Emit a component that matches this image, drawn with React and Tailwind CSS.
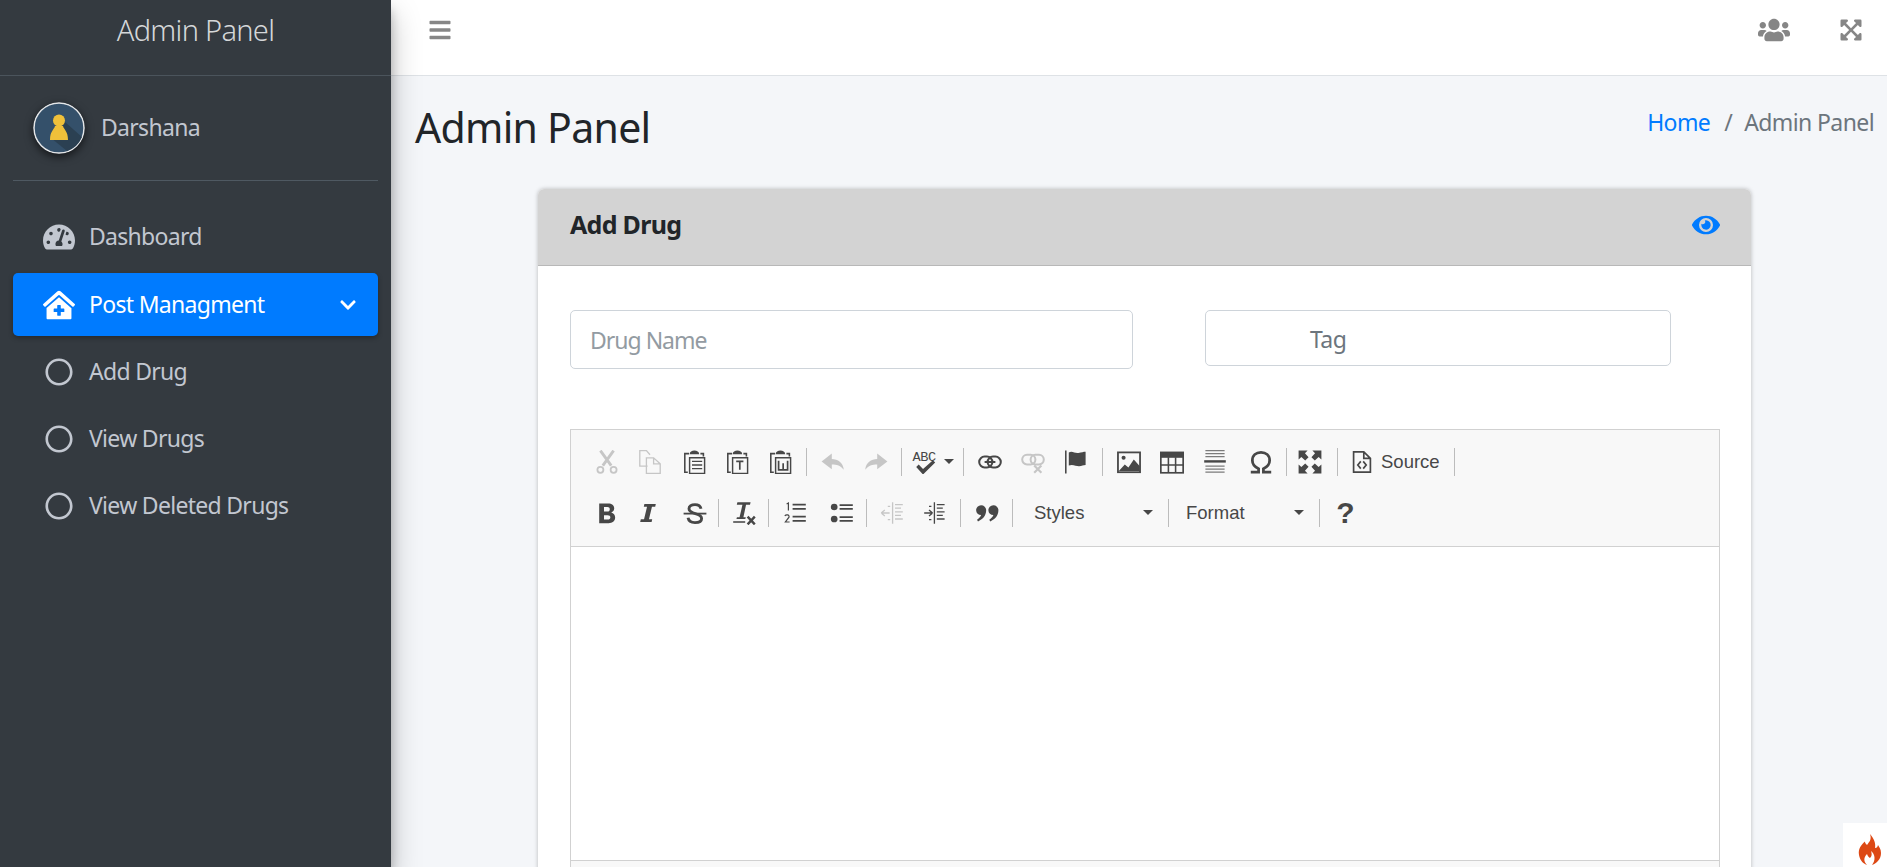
import React from 'react';
import { FaBars, FaChevronDown, FaClinicMedical, FaExpandArrowsAlt, FaEye, FaRegCircle, FaTachometerAlt, FaUsers } from 'react-icons/fa';

const sans = { fontFamily: '"Noto Sans", sans-serif' };

// ckeditor toolbar glyphs, all drawn on a 20x20 box
const clip = <><path d="M5 3H1.500v15.500H4M14.500 3H17v2.500" fill="none" stroke="currentColor" strokeWidth="1.300" /><path d="M5.500 3.500C5.500 1.500 7.500 .5 9.500 .5s4 1 4 3z" fill="currentColor" /><path d="M5.500 6.500h12.500v13H5.500z" fill="none" stroke="currentColor" strokeWidth="1.200" /></>;

const glyphs = {
  cut: <><path d="M4.500 .5l9 12.500M15.500 .5l-9 12.500" fill="none" stroke="currentColor" strokeWidth="2.400" /><circle cx="4.500" cy="16.500" r="2.500" fill="none" stroke="currentColor" strokeWidth="1.500" /><circle cx="15.500" cy="16.500" r="2.500" fill="none" stroke="currentColor" strokeWidth="1.500" /></>,
  copy: <path d="M8 13.500H1.500V.5H7l3 3.500M7 6.500h6l5.500 5v8H7zM13 6.500v5h5.500" fill="none" stroke="currentColor" strokeWidth="1.100" />,
  paste: <>{clip}<path d="M7.500 9.500h8.500M7.500 12.500h8.500M7.500 15.500h8.500" stroke="currentColor" strokeWidth="1.200" /></>,
  pasteText: <>{clip}<path d="M8.500 9.500h6M11.500 9.500v7" stroke="currentColor" strokeWidth="1.400" fill="none" /></>,
  pasteWord: <>{clip}<path d="M8 9v7.500h7.500V9M11.800 11v5.500" stroke="currentColor" strokeWidth="1.400" fill="none" /></>,
  undo: <path d="M9 3L.5 9.500 9 16v-4c4 0 7.500 1 10 4.500C18.500 10.500 14 7.500 9 7.500z" fill="currentColor" />,
  redo: <path d="M11 3l8.500 6.500L11 16v-4c-4 0-7.500 1-10 4.500C1.500 10.500 6 7.500 11 7.500z" fill="currentColor" />,
  check: <path d="M5 14.500l2-2 3.500 3.500L18.500 9l1.800 1.800L10.500 20.500z" fill="currentColor" />,
  link: <><rect x="1" y="5.500" width="11" height="9" rx="4.500" fill="none" stroke="currentColor" strokeWidth="1.700" /><rect x="8" y="5.500" width="11" height="9" rx="4.500" fill="none" stroke="currentColor" strokeWidth="1.700" /><path d="M5.500 10h9" stroke="currentColor" strokeWidth="1.700" /></>,
  unlink: <><rect x="1" y="4" width="11" height="8" rx="4" fill="none" stroke="currentColor" strokeWidth="1.700" /><rect x="8" y="4" width="11" height="8" rx="4" fill="none" stroke="currentColor" strokeWidth="1.700" /><path d="M11 13l6 6M17 13l-6 6" stroke="currentColor" strokeWidth="1.800" /></>,
  flag: <><path d="M1.500 .5v19" stroke="currentColor" strokeWidth="1.300" /><path d="M4 2c3-1.500 5 1 8 .5s4-1 6-1v11c-2 0-3 1-5.500 1S7 11.500 4 13z" fill="currentColor" /></>,
  image: <><rect x=".8" y="2" width="18.400" height="16.500" fill="none" stroke="currentColor" strokeWidth="1.500" /><circle cx="5.500" cy="6.500" r="1.700" fill="currentColor" /><path d="M1.500 17.500l5-5.500 3 2.500 4.500-6.500 5 5.500v4z" fill="currentColor" /></>,
  table: <><rect x=".7" y="2" width="18.600" height="17" fill="none" stroke="currentColor" strokeWidth="1.400" /><path d="M.7 2h18.600v4.500H.7z" fill="currentColor" /><path d="M.7 12.500h18.600M7 6v13M13 6v13" stroke="currentColor" strokeWidth="1.300" /></>,
  hr: <><path d="M2 .5h16M2 3h16M2 5.500h16M2 13.500h16M2 16h16M2 18.500h16" stroke="currentColor" strokeWidth="1" opacity="0.7" /><path d="M1 9.500h18" stroke="currentColor" strokeWidth="2" /></>,
  omega: <path d="M1.500 18.500h6.500v-2.800C4.500 14 2.800 11.500 2.800 8.800 2.800 4.500 5.800 2 10 2s7.200 2.500 7.200 6.800c0 2.700-1.700 5.200-5.200 6.900v2.800h6.500" fill="none" stroke="currentColor" strokeWidth="2.300" />,
  maximize: <path d="M.5 .5h7.500L5.800 2.800 8.800 6 6 8.800 2.800 5.800 .5 8zM19.500 .5V8l-2.300-2.200L14 8.800 11.200 6l3-3.200L12 .5zM.5 19.500V12l2.300 2.200L6 11.200 8.800 14l-3 3.200L8 19.500zM19.500 19.500H12l2.200-2.300-3-3.200L14 11.200l3.200 3 2.300-2.200z" fill="currentColor" />,
  source: <><path d="M3 1.500h8.500l5.500 5.500v11.500H3zM11.500 1.500V7H17" fill="none" stroke="currentColor" strokeWidth="1.400" /><path d="M9 9.500l-2.500 3 2.500 3M11 9.500l2.500 3-2.500 3" fill="none" stroke="currentColor" strokeWidth="1.400" /></>,
  bold: <path d="M3.500 2h7.500c3 0 5 1.500 5 4 0 1.700-1 3-2.500 3.500 2 .5 3.300 2 3.300 4.300 0 3-2.300 4.700-5.500 4.700H3.500zm4 3v3.800h2.800c1.400 0 2-.7 2-1.900S11.600 5 10.300 5zm0 6.800v3.700h3c1.500 0 2.300-.7 2.300-1.900s-.8-1.800-2.300-1.800z" fill="currentColor" fillRule="evenodd" />,
  italic: <path d="M7 2.500h9.500l-.5 2.300h-2.700L10.800 15.200h2.700l-.5 2.300H3.500l.5-2.300h2.700L9.200 4.800H6.500z" fill="currentColor" />,
  strike: <><path d="M15 6.500C14.500 4 12.800 3 10 3 7 3 5 4.300 5 6.500c0 5 10.500 3 10.500 8 0 2.200-2.300 3.500-5.500 3.500-3.300 0-5.300-1.300-5.800-4" fill="none" stroke="currentColor" strokeWidth="2.400" /><path d="M.5 10.500h19" stroke="currentColor" strokeWidth="1.500" /></>,
  clear: <><path d="M4.500 1h11l-.5 2.200h-3.300L9.500 13.500h2l-.4 1.500H3.700l.4-1.500h2.200L8.700 3.200H4z" fill="currentColor" /><path d="M1 17.500h10" stroke="currentColor" strokeWidth="1.300" /><path d="M13 13l6 6.500M19 13l-6 6.500" stroke="currentColor" strokeWidth="2" /></>,
  ol: <><path d="M3 2.500l1.500-.8V8M1.500 12.500c1-1.500 4-1.300 3.500 1L2 17.500h3.500" fill="none" stroke="currentColor" strokeWidth="1" /><path d="M8 3h11M8 6.500h11M8 13h11M8 16.500h11" stroke="currentColor" strokeWidth="1.500" /></>,
  ul: <><circle cx="3.500" cy="5" r="2.800" fill="currentColor" /><circle cx="3.500" cy="15" r="2.800" fill="currentColor" /><path d="M8 3.500h11M8 6.500h11M8 13.500h11M8 16.500h11" stroke="currentColor" strokeWidth="1.500" /></>,
  outdent: <path d="M10.500 1v18M12.500 3h6.500M12.500 6h5M12.500 9h6.500M12.500 12h5M12.500 15h6.500M1 10h7M1 10l3-2.500M1 10l3 2.500M6.500 4.500h2M6.500 15.500h2" fill="none" stroke="currentColor" strokeWidth="1.100" />,
  indent: <path d="M9.500 1v18M11.500 3H18M11.500 6h5M11.500 9H18M11.500 12h5M11.500 15H18M1 10h7M8 10L5 7.500M8 10l-3 2.500M5 4.500h2M5 15.500h2" fill="none" stroke="currentColor" strokeWidth="1.100" />,
  quote: <path d="M5 3.500a4.200 4.200 0 0 1 4.300 4.300c0 4.500-3 7.800-6.800 9.200l-.8-1.300c2-1.500 3-2.700 3.400-4A4.100 4.100 0 0 1 5 3.500zM15.200 3.500a4.200 4.200 0 0 1 4.300 4.300c0 4.500-3 7.800-6.800 9.200l-.8-1.300c2-1.500 3-2.700 3.400-4a4.100 4.100 0 0 1-.1-8.200z" fill="currentColor" />,
};

function Glyph({ name, off, extra = '' }) {
  return (
    <button className={`flex w-[43px] h-[40px] shrink-0 items-center justify-center ${off ? 'text-[#c6c6c6]' : 'text-[#474747]'} ${extra}`}>
      <svg width="24" height="24" viewBox="0 0 20 20">{glyphs[name]}</svg>
    </button>
  );
}

const Sep = ({ extra = '' }) => <span className={`w-px h-[28px] shrink-0 mx-1 bg-[#bcbcbc] ${extra}`}></span>;

const Caret = () => <span className="w-0 h-0 border-x-[5px] border-x-transparent border-t-[5px] border-t-[#474747]"></span>;

function Combo({ label, width }) {
  return (
    <div className={`flex items-center justify-between shrink-0 h-[40px] text-[18.5px] text-[#474747] ${width}`}>
      {label}
      <Caret />
    </div>
  );
}

function Toolbar() {
  return (
    <div className="bg-[#f8f8f8] border-b border-[#d1d1d1] pl-[14px] pt-[6px] h-[117px]" style={{ fontFamily: '"Liberation Sans", sans-serif' }}>
      <div className="flex items-center h-[51px]">
        <Glyph name="cut" off />
        <Glyph name="copy" off />
        <Glyph name="paste" extra="ml-[2px]" />
        <Glyph name="pasteText" />
        <Glyph name="pasteWord" />
        <Sep />
        <Glyph name="undo" off />
        <Glyph name="redo" off />
        <Sep extra="mr-[5px]" />
        <div className="flex items-center gap-[3px] w-[52px] h-[40px] pl-[3px] shrink-0 text-[#474747]">
          <svg width="31" height="25" viewBox="0 0 25 20">
            <text x="2" y="10" fontSize="11" letterSpacing="-0.3" fontFamily="Liberation Mono, monospace" fill="currentColor">ABC</text>
            {glyphs.check}
          </svg>
          <Caret />
        </div>
        <Sep />
        <Glyph name="link" />
        <Glyph name="unlink" off />
        <Glyph name="flag" />
        <Sep extra="ml-[5px]" />
        <Glyph name="image" />
        <Glyph name="table" />
        <Glyph name="hr" />
        <Glyph name="omega" extra="ml-[3px]" />
        <Sep extra="mr-[1px]" />
        <Glyph name="maximize" />
        <Sep extra="ml-[6px]" />
        <div className="flex items-center gap-[7px] shrink-0 pl-[8px] pr-[10px] text-[18.5px] text-[#474747]">
          <svg width="24" height="24" viewBox="0 0 20 20">{glyphs.source}</svg>
          Source
        </div>
        <Sep />
      </div>
      <div className="flex items-center h-[51px]">
        <Glyph name="bold" />
        <Glyph name="italic" extra="-ml-[2px]" />
        <Glyph name="strike" extra="ml-[4px]" />
        <Sep extra="ml-[2px] mr-[3px]" />
        <Glyph name="clear" />
        <Sep extra="ml-[3px]" />
        <Glyph name="ol" />
        <Glyph name="ul" extra="ml-[4px]" />
        <Sep extra="ml-[3px] mr-[3px]" />
        <Glyph name="outdent" off />
        <Glyph name="indent" />
        <Sep />
        <Glyph name="quote" />
        <Sep />
        <div className="pl-[17px]">
          <Combo label="Styles" width="w-[119px]" />
        </div>
        <span className="w-[11px]"></span>
        <Sep />
        <div className="pl-[13px]">
          <Combo label="Format" width="w-[118px]" />
        </div>
        <span className="w-[11px]"></span>
        <Sep />
        <div className="flex items-center justify-center w-[43px] text-[30px] font-bold text-[#474747]">?</div>
      </div>
    </div>
  );
}

function NavItem({ icon, label, active, extra = 'mb-1' }) {
  return (
    <a href="#" className={`flex items-center h-[63px] pl-[30px] pr-[21px] rounded-[5px] text-[23px] ${extra} ${active ? 'bg-[#007bff] text-white shadow-[0_2px_5px_rgba(0,0,0,0.3)]' : 'text-[#c2c7d0]'}`}>
      <span className="flex w-[46px] shrink-0 items-center">{icon}</span>
      <span className="grow tracking-[-0.7px]">{label}</span>
      {active && <FaChevronDown size={18} />}
    </a>
  );
}

function Sidebar() {
  return (
    <aside className="w-[391px] shrink-0 h-full bg-[#343a40] z-10 shadow-[0_14px_28px_rgba(0,0,0,0.25),0_10px_10px_rgba(0,0,0,0.22)]">
      <div className="h-[76px] border-b border-[#4b545c] flex justify-center pt-[11px]">
        <span className="text-[29px] font-light leading-[38px] text-[#d5d7d9] tracking-[-0.7px]">Admin Panel</span>
      </div>
      <div className="mx-[13px] h-[105px] border-b border-[#4f5962] flex items-center pl-5 gap-4">
        <svg width="52" height="52" viewBox="0 0 52 52" className="shrink-0 rounded-full shadow-[0_3px_8px_rgba(0,0,0,0.6)]">
          <circle cx="26" cy="26" r="25" fill="#34506a" stroke="#e4e6e8" strokeWidth="1.500" />
          <path d="M32 20l17 15a25 25 0 0 1-15 14L18 36z" fill="#2b4052" />
          <circle cx="26" cy="18.500" r="6" fill="#efc03a" />
          <path d="M22 24h8c1 4 5 5 5 14H17c0-9 4-10 5-14z" fill="#efc03a" />
        </svg>
        <span className="text-[23px] text-[#c2c7d0] tracking-[-0.7px] pb-[2px]">Darshana</span>
      </div>
      <nav className="mx-[13px] mt-[24px]">
        <NavItem icon={<FaTachometerAlt size={32} />} label="Dashboard" extra="mb-[5px]" />
        <NavItem icon={<FaClinicMedical size={32} />} label="Post Managment" active />
        <NavItem icon={<FaRegCircle size={28} className="ml-[2px]" />} label="Add Drug" />
        <NavItem icon={<FaRegCircle size={28} className="ml-[2px]" />} label="View Drugs" />
        <NavItem icon={<FaRegCircle size={28} className="ml-[2px]" />} label="View Deleted Drugs" />
      </nav>
    </aside>
  );
}

export default function App() {
  return (
    <div className="relative flex h-screen overflow-hidden bg-[#f4f6f9]" style={sans}>
      <Sidebar />
      <main className="grow min-w-0">
        <header className="h-[76px] bg-white border-b border-[#dee2e6] flex items-center justify-between pl-[37px] pr-[24px] pb-[16px] text-[#868686]">
          <FaBars size={24} />
          <div className="flex items-center gap-[49px]">
            <FaUsers size={32} />
            <FaExpandArrowsAlt size={24} />
          </div>
        </header>
        <div className="flex items-start justify-between pl-[24px] pr-[13px] pt-[23px] h-[113px]">
          <h1 className="text-[41px] leading-[56px] text-[#212529] tracking-[-0.7px]">Admin Panel</h1>
          <div className="flex gap-[12px] pt-[7px] text-[23px] leading-[32px] text-[#6c757d] tracking-[-0.6px]">
            <a href="#" className="text-[#007bff] mr-[2px]">Home</a>
            <span>/</span>
            <span>Admin Panel</span>
          </div>
        </div>
        <section className="ml-[147px] w-[1213px] bg-white rounded-[6px] shadow-[0_0_4px_rgba(0,0,0,0.25)] h-[800px]">
          <div className="flex items-center justify-between h-[77px] bg-[#d3d3d3] border-b border-[#b8b8b8] rounded-t-[6px] pl-[32px] pr-[31px] pb-[5px]">
            <h3 className="text-[25px] font-bold text-[#212529] tracking-[-0.7px]">Add Drug</h3>
            <FaEye size={28} className="text-[#007bff]" />
          </div>
          <div className="pl-[32px] pt-[44px]">
            <div className="flex items-start gap-[72px]">
              <input placeholder="Drug Name" className="w-[563px] h-[59px] pl-[19px] bg-white border border-[#ced4da] rounded-[5px] text-[23px] tracking-[-1px] outline-none placeholder:text-[#939ba2]" />
              <div className="w-[466px] h-[56px] pl-[104px] pt-[2px] flex items-center bg-white border border-[#ced4da] rounded-[5px] text-[23px] tracking-[-0.6px] text-[#6c757d]">Tag</div>
            </div>
            <div className="mt-[60px] w-[1150px] h-[500px] border border-[#d1d1d1]">
              <Toolbar />
              <div className="h-[313px] bg-white"></div>
              <div className="h-[40px] bg-[#f8f8f8] border-t border-[#d1d1d1]"></div>
            </div>
          </div>
        </section>
      </main>
      {/* debug bar toggle sitting in the corner */}
      <div className="absolute right-0 bottom-0 w-[44px] h-[44px] pt-[11px] pl-[15px] bg-white z-20">
        <svg width="24" height="33" viewBox="0 0 24 33">
          <path d="M12 0c2 6-1 8-3 11C7.500 9.500 7 9 7 7.500 3 11 0 15 1 21c1 6 5 9 8 10-3-3-4-7 0-11 1 3 2 3 3 4 2-2 2-4 1-7 4 3 5 9 1 14 5-2 9-6 9-12 0-4-2-6-3-8-.5 2-1 3-3 3 1-5-1-9-5-14z" fill="#dd4814" />
        </svg>
      </div>
    </div>
  );
}
